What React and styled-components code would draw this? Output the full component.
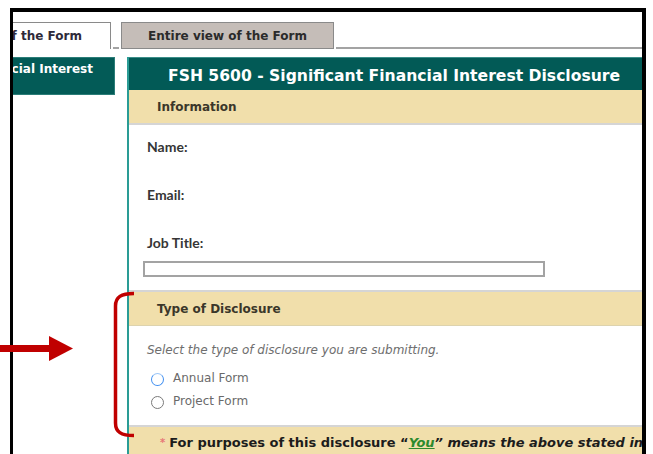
import React from "react";
import styled, { createGlobalStyle } from "styled-components";

const Global = createGlobalStyle`
  html, body {
    margin: 0;
    padding: 0;
    background: #ffffff;
    overflow: hidden;
  }
  body {
    font-family: "DejaVu Sans", Verdana, sans-serif;
  }
`;

const Page = styled.div`
  position: relative;
  width: 653px;
  height: 454px;
  overflow: hidden;
`;

const Frame = styled.div`
  margin: 8px 0 0 10px;
  width: 629px;
  height: 460px;
  border-top: 4px solid #000;
  border-left: 3px solid #000;
  border-right: 4px solid #000;
  overflow: hidden;
`;

const TabBar = styled.div`
  display: flex;
  align-items: flex-end;
  padding-top: 10px;
  height: 27px;
`;

const ActiveTab = styled.div`
  box-sizing: border-box;
  width: 98px;
  height: 27px;
  border-top: 1px solid #8a8a8a;
  border-right: 1px solid #8a8a8a;
  background: #ffffff;
  display: flex;
  align-items: center;
  justify-content: flex-end;
  padding-right: 28px;
  overflow: hidden;
  white-space: nowrap;
  font-size: 12px;
  font-weight: bold;
  color: #2e2a3a;
`;

const TabGap = styled.div`
  width: 6px;
  margin: 0 2px;
  border-bottom: 2px solid #a3a3a3;
`;

const Tab = styled.div`
  box-sizing: border-box;
  width: 213px;
  height: 27px;
  border: 1px solid #8a8a8a;
  background: #c5bdb8;
  display: flex;
  align-items: center;
  justify-content: center;
  white-space: nowrap;
  font-size: 12px;
  font-weight: bold;
  color: #2b2b2b;
`;

const TabLine = styled.div`
  flex: 1;
  margin-left: 2px;
  border-bottom: 2px solid #a3a3a3;
`;

const Body = styled.div`
  display: flex;
  align-items: flex-start;
  margin-top: 8px;
`;

const SideItem = styled.div`
  box-sizing: border-box;
  width: 102px;
  height: 38px;
  flex: none;
  background: #035b57;
  border: 1px solid #2b7d78;
  border-left: none;
  display: flex;
  justify-content: flex-end;
  padding: 4px 21px 0 0;
  overflow: hidden;
  white-space: nowrap;
  font-size: 12px;
  font-weight: bold;
  color: #ffffff;
`;

const Panel = styled.div`
  flex: 1;
  min-width: 0;
  margin-left: 12px;
  border-left: 2px solid #2a9c95;
`;

const Title = styled.div`
  box-sizing: border-box;
  height: 33px;
  border-top: 1px solid #3b8e89;
  background: #025a56;
  display: flex;
  align-items: center;
  padding: 3px 0 0 39px;
  white-space: nowrap;
  font-size: 15.6px;
  font-weight: bold;
  color: #ffffff;
`;

const SectionHead = styled.div`
  height: 33px;
  background: #f1dfab;
  display: flex;
  align-items: center;
  padding-left: 28px;
  font-size: 12px;
  font-weight: bold;
  color: #3b372a;
  border-top: ${(p) => (p.$divided ? "2px solid #d5d5d5" : "none")};
  border-bottom: ${(p) => (p.$divided ? "1px solid #ddd3ae" : "2px solid #d5d5d5")};
`;

const FieldList = styled.div`
  padding: 10px 0 13px 18px;
`;

const Label = styled.div`
  font-family: Lato, "Open Sans", sans-serif;
  font-size: 14px;
  font-weight: 700;
  line-height: 24px;
  color: #363636;
`;

const Value = styled.div`
  height: 24px;
`;

const TextBox = styled.div`
  box-sizing: border-box;
  width: 402px;
  height: 16px;
  margin: 6px 0 0 -4px;
  border: 2px solid #a3a3a3;
  background: #ffffff;
`;

const ChoiceList = styled.div`
  padding: 15px 0 13px 18px;
`;

const Hint = styled.div`
  font-size: 12px;
  font-style: italic;
  line-height: 18px;
  color: #6e6e6e;
  margin-bottom: 7px;
`;

const Option = styled.label`
  display: flex;
  align-items: center;
  height: 23px;
  font-size: 12px;
  color: #6a6a6a;
`;

const Radio = styled.span`
  box-sizing: border-box;
  width: 13px;
  height: 13px;
  margin: 3px 9px 0 4px;
  border-radius: 50%;
  border: 1.5px solid ${(p) => (p.$focused ? "#3f8ef0" : "#7a7a7a")};
  border-top-color: ${(p) => (p.$focused ? "#9cc6f7" : "#7a7a7a")};
`;

const Note = styled.div`
  height: 30px;
  border-top: 2px solid #d5d5d5;
  background: #f1dfab;
  display: flex;
  align-items: center;
  padding-left: 31px;
  white-space: nowrap;
  font-size: 13px;
  font-weight: bold;
  color: #1c1c1c;
`;

const Required = styled.span`
  color: #e77676;
  font-size: 10px;
  margin-right: 4px;
`;

const Emph = styled.em`
  font-style: italic;
`;

const YouLink = styled.span`
  color: #2d8a2d;
  font-style: italic;
  text-decoration: underline;
`;

const Markup = styled.svg`
  position: absolute;
  left: 0;
  top: 0;
  pointer-events: none;
`;

export default function App() {
  return (
    <Page>
      <Global />
      <Frame>
        <TabBar>
          <ActiveTab>Section view of the Form</ActiveTab>
          <TabGap />
          <Tab>Entire view of the Form</Tab>
          <TabLine />
        </TabBar>
        <Body>
          <SideItem>Significant Financial Interest</SideItem>
          <Panel>
            <Title>FSH 5600 - Significant Financial Interest Disclosure</Title>
            <SectionHead>Information</SectionHead>
            <FieldList>
              <Label>Name:</Label>
              <Value />
              <Label>Email:</Label>
              <Value />
              <Label>Job Title:</Label>
              <TextBox />
            </FieldList>
            <SectionHead $divided>Type of Disclosure</SectionHead>
            <ChoiceList>
              <Hint>Select the type of disclosure you are submitting.</Hint>
              <Option>
                <Radio $focused />
                Annual Form
              </Option>
              <Option>
                <Radio />
                Project Form
              </Option>
            </ChoiceList>
            <Note>
              <Required>*</Required>
              For purposes of this disclosure “<YouLink>You</YouLink>
              <Emph>” means the above stated individual and his or her spouse</Emph>
            </Note>
          </Panel>
        </Body>
      </Frame>
      <Markup width="653" height="454" viewBox="0 0 653 454">
        <rect x="0" y="345" width="51" height="7" fill="#c00000" />
        <polygon points="49,336 73,348.5 49,361" fill="#c00000" />
        <path
          d="M134 293.5 C121 293.5 115.5 297 115.5 306 L115.5 423 C115.5 432 121 435.5 134 435.5"
          fill="none"
          stroke="#c00000"
          strokeWidth="3.5"
        />
      </Markup>
    </Page>
  );
}
